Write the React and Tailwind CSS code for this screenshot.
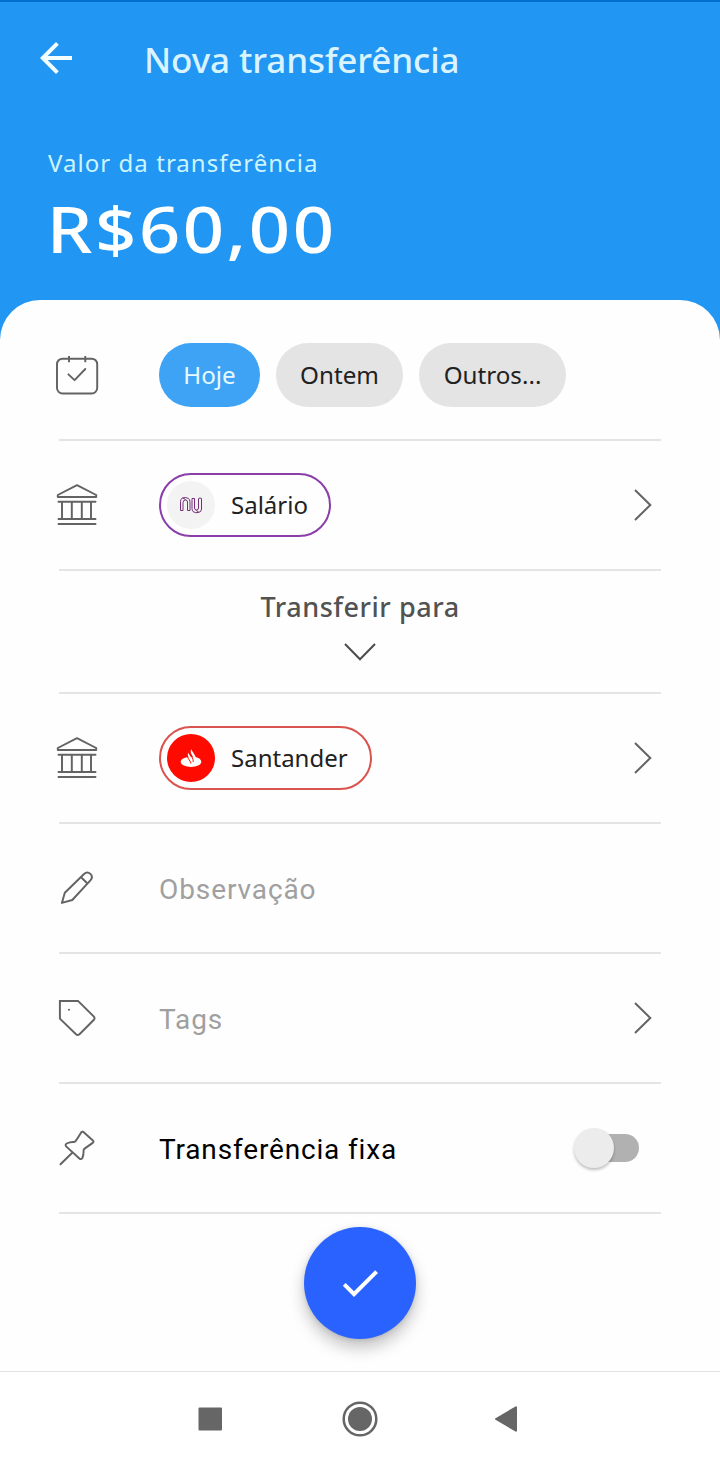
const ICON = "h-12 w-12 shrink-0 -ml-[6px] mr-[58px]";

function LineIcon({ children }) {
  return (
    <svg viewBox="0 0 48 48" className={ICON} fill="none" stroke="#636363" strokeWidth="1.95" strokeLinecap="round" strokeLinejoin="round">
      {children}
    </svg>
  );
}

function CalendarIcon() {
  return (
    <LineIcon>
      <rect x="4" y="7.7" width="40.2" height="34.8" rx="5.5" />
      <path d="M16 5v6.200M32.300 5v6.200" strokeLinecap="butt" />
      <path d="M15.400 23.400l6.200 5.700 10.700-11.100" />
    </LineIcon>
  );
}

function BankIcon() {
  return (
    <LineIcon>
      <path d="M24 4.200 4.800 14v2h38.400v-2z" />
      <path d="M5.500 20.700h37M5.500 38h37M5.500 43h37M9 20.700v17.300M18.800 20.700v17.300M28.800 20.700v17.300M38 20.700v17.300" />
    </LineIcon>
  );
}

function PencilIcon() {
  return (
    <LineIcon>
      <path d="M8.900 38.900l2.900-10.100L30.800 10.200c2.200-2.200 4.800-2 6.600-.3 1.900 1.900 2.100 4.300 0 6.500L19.300 36z" />
      <path d="M28.800 14l5.200 5" />
    </LineIcon>
  );
}

function TagIcon() {
  return (
    <LineIcon>
      <path d="M6.900 6.900H25l15.900 15.700q1.300 1.700 0 3.200L26.500 40.200q-1.800 1.400-3.500 0L6.900 24.700z" strokeLinejoin="miter" />
      <path d="M15.900 15.700h.1" />
    </LineIcon>
  );
}

function PinIcon() {
  return (
    <LineIcon>
      <path d="M7.500 40.300 19 29" />
      <path d="M28.200 8.400q1-1.500 2.500-.2l9.200 8.200q1.300 1.400-.2 2.500L31.600 24.600q-1.100.8-1 2.200.1 4.300-1.200 7.200-1.200 2-3 .4L13.100 22.400q-1.300-1.800.7-2.900 3.300-1.700 6.900-1.500 1.400.1 2.200-1.200z" />
    </LineIcon>
  );
}

function ChevronRight() {
  return (
    <svg viewBox="0 0 48 48" className="-mr-[6px] ml-auto h-12 w-12 shrink-0" fill="none" stroke="#636363" strokeWidth="2">
      <path d="M16 9l15.300 15L16 39" />
    </svg>
  );
}

function Row({ icon, children }) {
  return (
    <div className="flex h-[130px] items-center border-b-2 border-[#e4e4e4]">
      {icon}
      {children}
    </div>
  );
}

function DateChip({ className, children }) {
  return (
    <button className={"flex h-16 shrink-0 items-center justify-center whitespace-nowrap rounded-full text-[24.200px] " + className}>
      {children}
    </button>
  );
}

function AccountChip({ className, logo, children }) {
  return (
    <button className={"flex h-16 shrink-0 items-center gap-4 whitespace-nowrap rounded-full border-2 pl-[6px] text-[24px] text-[#212121] " + className}>
      {logo}
      <span>{children}</span>
    </button>
  );
}

function NuLogo() {
  return (
    <svg viewBox="0 0 48 48" className="h-12 w-12 shrink-0">
      <circle cx="24" cy="24" r="24" fill="#f3f3f3" />
      <path
        d="M13.500 29.500V20.500q0-2.500 2-3.500 3.500-1.200 6 .5 1.500 1.200 1.500 3.500v8.500h-2.500V21q0-2-2-2-2.500 0-2.500 2.500v8zM15.500 17q2.500.2 3 2M25 17.500h2.500V27q0 2 2 2t2-2v-9.500q1.500-1 3 0V28q0 3-3 3.500-3.500.8-5.500-1-1-1.200-1-3zM29.500 29q.5 2 2.500 2.300"
        fill="none"
        stroke="#742f79"
        strokeWidth="1"
      />
    </svg>
  );
}

function SantanderLogo() {
  return (
    <svg viewBox="0 0 48 48" className="h-12 w-12 shrink-0">
      <circle cx="24" cy="24" r="24" fill="#ff0a00" />
      <path d="M20 23.200c-4 .8-6.300 2.500-6.300 4.600 0 2.900 4.600 5.100 10.300 5.100s10.300-2.200 10.300-5.100c0-2.200-2.400-4-6-4.700z" fill="#fff" />
      <path d="M24.200 15c-1 2.500-.5 4.200.8 6.200l2.200 3.800c.7 1.300.8 2.300.6 3.600 1.800-2.400 1.600-4.600.3-6.800l-2.400-4c-.8-1.200-1.300-1.800-1.500-2.800z" fill="#fff" />
      <path d="M21.200 18.500c-.8 2.300-.3 3.800.9 5.700l2.400 4.300c.9-2 .6-3.700-.5-5.500l-1.600-2.200c-.6-.8-1-1.400-1.200-2.300z" fill="#fff" />
      <path d="M20.600 22.500c.2 2.500 3 4.300 3.400 7M23 19.500c.8 2 3.400 4.500 3.300 8.500" fill="none" stroke="#ff0a00" strokeWidth="1" />
    </svg>
  );
}

export default function App() {
  return (
    <div className="flex h-[1467px] w-[720px] flex-col overflow-hidden bg-[#2296f3] font-['Noto_Sans',sans-serif]">
      <header className="h-[300px] shrink-0 border-t-2 border-[#006fcb]">
        <div className="flex h-28 items-center pl-8">
          <svg viewBox="0 0 24 24" className="h-12 w-12 shrink-0" fill="#f4ffff">
            <path d="M20 11H7.830l5.590-5.590L12 4l-8 8 8 8 1.410-1.410L7.830 13H20z" />
          </svg>
          <h1 className="ml-16 mt-[3px] whitespace-nowrap text-[35px] font-medium leading-[48px] tracking-[-0.100px] text-[#d9f4ff]">
            Nova transferência
          </h1>
        </div>
        <div className="pl-12">
          <p className="mt-[33px] text-[24px] leading-[32px] tracking-[1.050px] text-[#cdf5ff]">Valor da transferência</p>
          <p className="mt-[10px] w-max origin-left scale-x-[1.130] whitespace-nowrap text-[64px] font-medium leading-[80px] tracking-[2.200px] text-white">
            <span className="-ml-px">R$60,00</span>
          </p>
        </div>
      </header>

      <main className="h-[1071px] shrink-0 rounded-t-[40px] bg-[#fefefe] px-[59px] pt-[11px]">
        <Row icon={<CalendarIcon />}>
          <div className="flex gap-4">
            <DateChip className="w-[101px] bg-[#3fa3f5] text-[#e6fbff]">Hoje</DateChip>
            <DateChip className="w-[127px] bg-[#e4e4e4] text-[#212121]">Ontem</DateChip>
            <DateChip className="w-[147px] bg-[#e4e4e4] text-[#212121]">Outros...</DateChip>
          </div>
        </Row>
        <Row icon={<BankIcon />}>
          <AccountChip className="w-[172px] border-[#8a3ea8]" logo={<NuLogo />}>
            Salário
          </AccountChip>
          <ChevronRight />
        </Row>
        <div className="flex h-[123px] flex-col items-center border-b-2 border-[#e4e4e4] pt-4">
          <span className="text-[27px] font-medium leading-[40px] tracking-[0.550px] text-[#525252]">Transferir para</span>
          <svg viewBox="0 0 32 20" className="mt-[15px] h-5 w-8" fill="none" stroke="#4c4c4c" strokeWidth="2">
            <path d="M1 2l15 15.300L31 2" />
          </svg>
        </div>
        <Row icon={<BankIcon />}>
          <AccountChip className="w-[213px] border-[#d9534f]" logo={<SantanderLogo />}>
            Santander
          </AccountChip>
          <ChevronRight />
        </Row>
        <Row icon={<PencilIcon />}>
          <span className="pt-[3px] font-['Roboto',sans-serif] text-[28px] tracking-[0.900px] text-[#a0a0a0]">Observação</span>
        </Row>
        <Row icon={<TagIcon />}>
          <span className="pt-[3px] font-['Roboto',sans-serif] text-[28px] tracking-[0.900px] text-[#a0a0a0]">Tags</span>
          <ChevronRight />
        </Row>
        <Row icon={<PinIcon />}>
          <span className="pt-[3px] font-['Roboto',sans-serif] text-[28px] tracking-[0.840px] text-black">Transferência fixa</span>
          <button role="switch" aria-checked="false" className="ml-auto mr-[22px] flex h-7 w-[59px] items-center rounded-full bg-[#b1b1b1]">
            <span className="-ml-[6px] h-10 w-10 rounded-full bg-[#ececec] shadow-[0_2px_3px_rgba(0,0,0,0.25)]" />
          </button>
        </Row>
        <div className="flex justify-center pt-[13px]">
          <button className="flex h-28 w-28 items-center justify-center rounded-full bg-[#2962ff] shadow-[0_9px_16px_rgba(0,0,0,0.23),0_1px_5px_rgba(0,0,0,0.12)]">
            <svg viewBox="0 0 24 24" className="h-12 w-12" fill="#fff">
              <path d="M9 16.170 4.830 12l-1.420 1.410L9 19 21 7l-1.410-1.410z" />
            </svg>
          </button>
        </div>
      </main>

      <nav className="h-24 shrink-0 border-t border-[#e2e2e2] bg-white">
        <div className="flex h-full items-center pb-px pl-[198px]">
          <svg viewBox="0 0 24 24" className="h-6 w-6">
            <rect x=".5" y=".5" width="23.500" height="23" rx="1" fill="#666" />
          </svg>
          <svg viewBox="0 0 36 36" className="ml-[119.500px] h-9 w-9">
            <circle cx="18" cy="18" r="16.300" fill="none" stroke="#666" strokeWidth="2.500" />
            <circle cx="18" cy="18" r="12" fill="#666" />
          </svg>
          <svg viewBox="0 0 24 28" className="ml-[116px] h-7 w-6" fill="#666" stroke="#666" strokeWidth="2" strokeLinejoin="round">
            <path d="M2 14 22 2.300v23.400z" />
          </svg>
        </div>
      </nav>
    </div>
  );
}
